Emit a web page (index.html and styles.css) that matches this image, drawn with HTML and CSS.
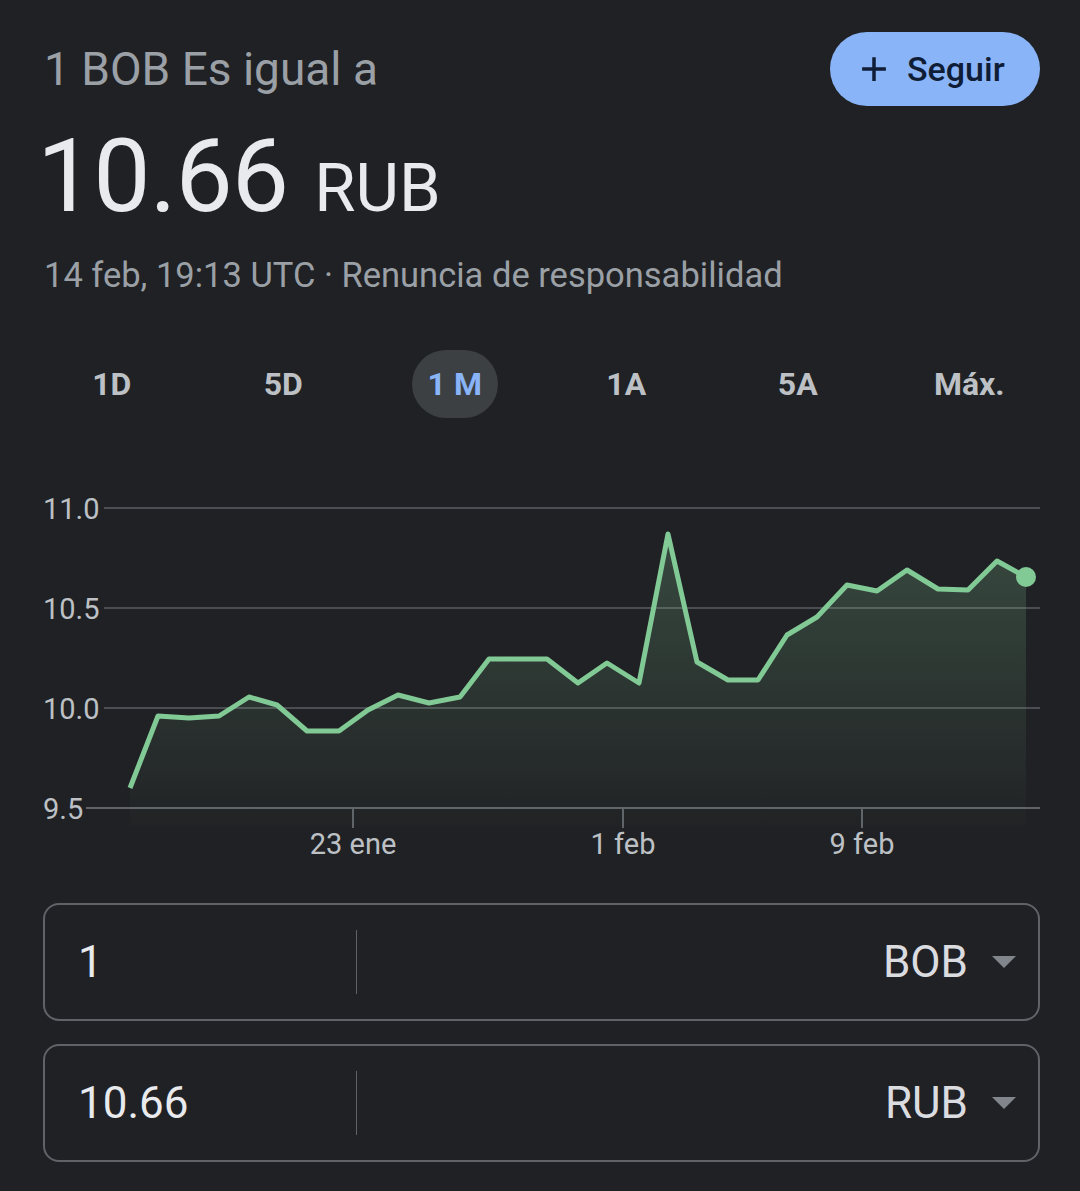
FILE: index.html
```html
<!DOCTYPE html>
<html lang="es">
<head>
    <meta charset="UTF-8">
    <meta name="viewport" content="width=device-width, initial-scale=1.0">
    <title>BOB a RUB</title>
    <link rel="stylesheet" href="styles.css">
</head>
<body>
    <div class="container">
        <div class="header">
            <div class="title">1 BOB Es igual a</div>
            <button class="follow" type="button">
                <svg width="30" height="30" viewBox="0 0 24 24"><path d="M12 2.5v19M2.5 12h19" stroke="currentColor" stroke-width="2.8" fill="none"/></svg>
                <span>Seguir</span>
            </button>
        </div>

        <div class="rate">
            <span class="rate-value">10.66</span>
            <span class="rate-currency">RUB</span>
        </div>
        <div class="meta">14 feb, 19:13 UTC · Renuncia de responsabilidad</div>

        <div class="tabs">
            <span class="tab">1D</span>
            <span class="tab">5D</span>
            <span class="tab active">1 M</span>
            <span class="tab">1A</span>
            <span class="tab">5A</span>
            <span class="tab">Máx.</span>
        </div>

        <svg class="chart" width="1080" height="400" viewBox="0 480 1080 400">
            <defs>
                <linearGradient id="area" x1="0" y1="534" x2="0" y2="826" gradientUnits="userSpaceOnUse">
                    <stop offset="0" stop-color="#81c995" stop-opacity="0.24"/>
                    <stop offset="1" stop-color="#81c995" stop-opacity="0.01"/>
                </linearGradient>
            </defs>
            <!-- lineas de referencia -->
            <line class="grid" x1="104" y1="508" x2="1040" y2="508"/>
            <line class="grid" x1="104" y1="608" x2="1040" y2="608"/>
            <line class="grid" x1="104" y1="708" x2="1040" y2="708"/>
            <line class="axis" x1="86" y1="808" x2="1040" y2="808"/>
            <line class="axis" x1="353" y1="808" x2="353" y2="828"/>
            <line class="axis" x1="623" y1="808" x2="623" y2="828"/>
            <line class="axis" x1="862" y1="808" x2="862" y2="828"/>

            <text class="label" x="43" y="519">11.0</text>
            <text class="label" x="43" y="619">10.5</text>
            <text class="label" x="43" y="719">10.0</text>
            <text class="label" x="43" y="819">9.5</text>
            <text class="label" x="353" y="854" text-anchor="middle">23 ene</text>
            <text class="label" x="623" y="854" text-anchor="middle">1 feb</text>
            <text class="label" x="862" y="854" text-anchor="middle">9 feb</text>

            <polygon fill="url(#area)" points="130,826 130,788 158,716 189,718 219,716 249,697 277,705 307,731 339,731 368,710 398,695 429,703 460,697 489,659 518,659 547,659 578,683 607,663 639,683 668,534 697,662 728,680 758,680 787,635 817,617 847,585 877,591 907,570 938,589 968,590 997,561 1026,577 1026,826"/>
            <polyline class="line" points="130,788 158,716 189,718 219,716 249,697 277,705 307,731 339,731 368,710 398,695 429,703 460,697 489,659 518,659 547,659 578,683 607,663 639,683 668,534 697,662 728,680 758,680 787,635 817,617 847,585 877,591 907,570 938,589 968,590 997,561 1026,577"/>
            <circle cx="1026" cy="577" r="10" fill="#81c995"/>
        </svg>

        <div class="converter">
            <div class="field">
                <div class="amount">1</div>
                <div class="divider"></div>
                <div class="currency">BOB<span class="caret"></span></div>
            </div>
            <div class="field">
                <div class="amount">10.66</div>
                <div class="divider"></div>
                <div class="currency">RUB<span class="caret"></span></div>
            </div>
        </div>
    </div>
</body>
</html>
```

FILE: styles.css
```css
body {
    margin: 0;
    background-color: #202124;
    font-family: Roboto, "Liberation Sans", sans-serif;
    color: #e8eaed;
}
.container {
    width: 1080px;
    padding-top: 32px;
}
.header {
    display: flex;
    align-items: center;
    justify-content: space-between;
    height: 74px;
    padding: 0 40px 0 44px;
}
.title {
    font-size: 46px;
    line-height: 56px;
    color: #9aa0a6;
}
.follow {
    display: flex;
    align-items: center;
    gap: 18px;
    width: 210px;
    height: 74px;
    padding: 0 0 0 29px;
    border: none;
    border-radius: 37px;
    background-color: #8ab4f8;
    color: #0f1d36;
    font-family: inherit;
    font-size: 34px;
    font-weight: 500;
}
.rate {
    display: flex;
    align-items: baseline;
    gap: 26px;
    margin-top: 18px;
    padding-left: 37px;
    line-height: 104px;
}
.rate-value {
    font-size: 102px;
    letter-spacing: -1px;
    color: #e8eaed;
}
.rate-currency {
    font-size: 67px;
    color: #e8eaed;
}
.meta {
    margin-top: 15px;
    padding-left: 44px;
    font-size: 34.5px;
    line-height: 40px;
    color: #9aa0a6;
}
.tabs {
    display: grid;
    grid-template-columns: repeat(6, 1fr);
    justify-items: center;
    align-items: center;
    margin-top: 55px;
    padding: 0 25px 0 26px;
    height: 68px;
}
.tab {
    height: 68px;
    padding: 0 16px;
    border-radius: 34px;
    font-size: 32px;
    font-weight: 700;
    line-height: 68px;
    color: #bdc1c6;
}
.tab.active {
    background-color: #3c4043;
    color: #8ab4f8;
}
.chart {
    display: block;
    margin-top: 62px;
}
.chart .grid {
    stroke: #4a4d51;
    stroke-width: 2;
}
.chart .axis {
    stroke: #5f6368;
    stroke-width: 2;
}
.chart .label {
    font-family: Roboto, "Liberation Sans", sans-serif;
    font-size: 29px;
    fill: #bdc1c6;
}
.chart .line {
    fill: none;
    stroke: #81c995;
    stroke-width: 5;
    stroke-linejoin: round;
}
.converter {
    display: flex;
    flex-direction: column;
    gap: 23px;
    margin: 23px 40px 0 43px;
}
.field {
    display: flex;
    align-items: center;
    height: 114px;
    border: 2px solid #5f6368;
    border-radius: 16px;
}
.amount {
    width: 278px;
    padding-left: 33px;
    font-size: 44px;
    color: #e8eaed;
}
.divider {
    width: 1px;
    height: 64px;
    background-color: #5f6368;
}
.currency {
    flex: 1;
    display: flex;
    align-items: center;
    justify-content: flex-end;
    padding-right: 22px;
    font-size: 44px;
    color: #dadce0;
}
.caret {
    margin-left: 24px;
    border-left: 12px solid transparent;
    border-right: 12px solid transparent;
    border-top: 12px solid #80868b;
}
```
